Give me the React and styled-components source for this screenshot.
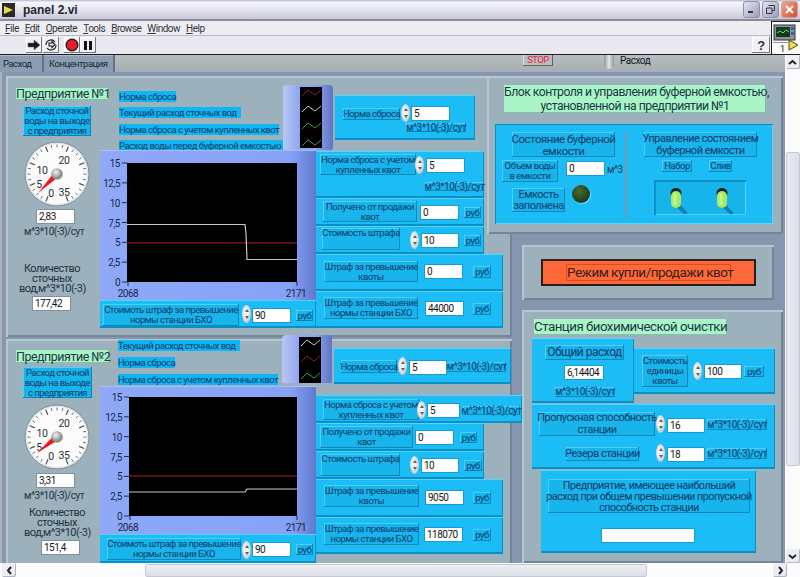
import React from "react";
import styled, { createGlobalStyle } from "styled-components";

const GlobalStyle = createGlobalStyle`
  html, body { margin: 0; padding: 0; background: #8b9bb0; }
  body { font-family: Roboto, "Liberation Sans", Arial, sans-serif; letter-spacing: -0.5px; }
  svg text { font-family: Roboto, "Liberation Sans", Arial, sans-serif; }
`;

const CYAN = "#1cbdf6";
const INK = "#103a68";

// window chrome
const Window = styled.div`
  width: 800px;
  height: 577px;
  overflow: hidden;
  display: flex;
  flex-direction: column;
  background: #ecedf2;
`;
const TitleBar = styled.div`
  height: 19px;
  flex: none;
  display: flex;
  align-items: center;
  padding: 0 2px 0 2px;
  background: linear-gradient(#b8b9d4 0, #f6f6fa 12%, #e4e4ee 50%, #c6c7dc 100%);
  border-bottom: 2px solid #8b8c96;
`;
const TitleText = styled.span`
  margin-left: 8px;
  font: bold 12px "Liberation Sans", sans-serif;
  letter-spacing: 0;
  color: #23262e;
`;
const WinButtons = styled.div`
  margin-left: auto;
  display: flex;
  gap: 2px;
`;
const WinButton = styled.div`
  width: 15px;
  height: 15px;
  border-radius: 3px;
  border: 1px solid ${(p) => (p.$close ? "#c9a49a" : "#8e90aa")};
  background: ${(p) =>
    p.$close
      ? "linear-gradient(135deg, #f0a58e, #dd4a28)"
      : "linear-gradient(135deg, #e6e7f0, #9a9cb8)"};
  display: flex;
  align-items: center;
  justify-content: center;
`;
const HeaderRow = styled.div`
  flex: none;
  height: 33px;
  display: flex;
  border-bottom: 1px solid #1d1d22;
`;
const HeaderBars = styled.div`
  flex: 1;
  display: flex;
  flex-direction: column;
`;
const MenuBar = styled.div`
  height: 14px;
  display: flex;
  align-items: center;
  gap: 6px;
  padding-left: 5px;
  background: #ececf2;
  border-bottom: 1px solid #bcbcc6;
  font-size: 10px;
  color: #33363d;
`;
const ToolBar = styled.div`
  flex: 1;
  display: flex;
  align-items: center;
  padding: 0 1px 0 26px;
  background: #e8e8ee;
`;
const ToolButton = styled.div`
  width: 16px;
  height: 16px;
  margin-left: ${(p) => p.$ml || 0}px;
  display: flex;
  align-items: center;
  justify-content: center;
  background: #f1f1f4;
  box-shadow: inset -1px -1px 0 #77777f, inset 1px 1px 0 #ffffff;
`;
const HelpButton = styled(ToolButton)`
  margin-left: auto;
  width: 18px;
  font: bold 13px "Liberation Sans", sans-serif;
  color: #33333a;
`;
const IconPane = styled.div`
  width: 28px;
  background: #fbfbfb;
  border-left: 1px solid #1d1d22;
  border-top: 1px solid #1d1d22;
`;

const MainRow = styled.div`
  flex: none;
  height: 508px;
  display: flex;
`;
const LeftPane = styled.div`
  width: 785px;
  display: flex;
  flex-direction: column;
`;
const TabStrip = styled.div`
  height: 17px;
  flex: none;
  display: flex;
  align-items: flex-start;
  background: linear-gradient(#b6bdc0, #a6aeb2);
  overflow: hidden;
`;
const Tab = styled.div`
  height: 17px;
  width: ${(p) => p.$w}px;
  box-sizing: border-box;
  margin-left: ${(p) => p.$ml || 0}px;
  padding-left: ${(p) => p.$pl || 0}px;
  font-size: 9.5px;
  line-height: 17px;
  color: #1c2733;
  background: #8b9cb3;
  box-shadow: inset -2px 0 0 #62728a, inset 0 1px 0 #adbbcd;
`;
const StopButton = styled.div`
  width: 30px;
  height: 11px;
  margin-left: 408px;
  background: #b8bcc0;
  box-shadow: inset -1px -1px 0 #5f6468, inset 1px 0 0 #dfe2e4;
  color: #e8262c;
  font-size: 9.5px;
  line-height: 10px;
  text-align: center;
`;
const EnumText = styled.div`
  margin-left: 6px;
  font-size: 10px;
  line-height: 11px;
  color: #16181c;
`;
const EnumArrow = styled.div`
  width: 10px;
  height: 14px;
  margin-left: 51px;
  background: linear-gradient(90deg, #8f9598, #e4e6e8 50%, #8f9598);
  border-radius: 0 0 6px 6px;
`;

const Workspace = styled.div`
  flex: 1;
  height: 491px;
  display: flex;
  overflow: hidden;
  padding: 4px 0 0 6px;
  box-sizing: border-box;
  background: #8596ae;
  box-shadow: inset 2px 0 0 #a8b2b8;
`;
const LeftColumn = styled.div`
  width: 506px;
  flex: none;
  display: flex;
  flex-direction: column;
  gap: 2px;
`;
const RightColumn = styled.div`
  width: 296px;
  flex: none;
  margin-left: -25px;
  z-index: 1;
  display: flex;
  flex-direction: column;
  align-items: flex-start;
`;

const Panel = styled.div`
  width: ${(p) => p.$w}px;
  height: ${(p) => p.$h}px;
  margin: ${(p) => p.$m || 0};
  flex: none;
  background: #9db1bc;
  box-shadow: inset 2px 2px 0 #b6c7cf, inset -2px -2px 0 #748598;
`;
const EnterprisePanel = styled(Panel)`
  display: flex;
  align-items: flex-start;
`;
const SideColumn = styled.div`
  width: 94px;
  flex: none;
  display: flex;
  flex-direction: column;
  align-items: flex-start;
`;
const PlantArea = styled.div`
  flex: 1;
  display: flex;
  flex-direction: column;
  position: relative;
`;
const TopRow = styled.div`
  height: ${(p) => p.$h}px;
  display: flex;
  align-items: flex-start;
`;
const BottomRow = styled.div`
  display: flex;
  align-items: flex-start;
`;
const MintTitle = styled.div`
  flex: none;
  width: ${(p) => p.$w}px;
  height: ${(p) => p.$h}px;
  margin: ${(p) => p.$m || 0};
  position: relative;
  z-index: 2;
  background: #a9f5c8;
  box-shadow: inset -1px -1px 0 #7fc3a2;
  color: #1b3a45;
  font-size: ${(p) => p.$fs || 12.2}px;
  line-height: ${(p) => p.$lh || p.$h}px;
  text-align: ${(p) => p.$align || "center"};
  white-space: nowrap;
`;
const Caption = styled.div`
  flex: none;
  box-sizing: border-box;
  width: ${(p) => p.$w}px;
  height: ${(p) => p.$h}px;
  margin: ${(p) => p.$m || 0};
  position: relative;
  z-index: 2;
  display: flex;
  align-items: ${(p) => (p.$top ? "flex-start" : "center")};
  justify-content: center;
  text-align: center;
  background: #17b5ec;
  box-shadow: inset -1px -1px 0 #0a86bb, inset 1px 1px 0 #4fd0fa;
  color: ${INK};
  font-size: ${(p) => p.$fs || 9.5}px;
  line-height: ${(p) => p.$lh || 10}px;
  white-space: pre;
`;
const LegendLabels = styled.div`
  width: 164px;
  margin: ${(p) => p.$m};
  flex: none;
  display: flex;
  flex-direction: column;
  gap: ${(p) => p.$gap}px;
`;
const LegendLabel = styled.div`
  height: 11px;
  width: ${(p) => p.$w}px;
  background: #0fb6f2;
  color: ${INK};
  font-size: 9.5px;
  line-height: 11px;
  white-space: nowrap;
`;
const Legend = styled.div`
  width: 50px;
  height: ${(p) => p.$h}px;
  margin-top: ${(p) => p.$mt}px;
  flex: none;
  position: relative;
  z-index: 2;
  padding: 2px 0 0 17px;
  box-sizing: border-box;
  border-radius: 4px 4px 2px 2px;
  background: linear-gradient(90deg, #b8c7f3, #8ea5f0 35%, #8ea5f0 65%, #6074c2);
  svg { display: block; }
`;
const CtlRow = styled.div`
  flex: none;
  box-sizing: border-box;
  width: ${(p) => p.$w}px;
  height: ${(p) => p.$h}px;
  margin: ${(p) => p.$m || 0};
  display: flex;
  flex-wrap: wrap;
  align-items: flex-start;
  align-content: flex-start;
  background: ${CYAN};
  box-shadow: inset 0 1px 0 #55d3fb, inset -1px -2px 0 #0b90c6;
  position: relative;
`;
const Stack = styled.div`
  margin-top: ${(p) => p.$mt}px;
  display: flex;
  flex-direction: column;
  align-items: flex-start;
`;
const Graph = styled.div`
  width: 216px;
  flex: none;
`;
const ChartBox = styled.div`
  height: ${(p) => p.$h}px;
  background: linear-gradient(90deg, #8fa9f8 0, #86a2f7 88%, #6179cb 100%);
  box-shadow: inset 0 1px 0 #a9bdf8;
  svg { display: block; }
`;
const Numeric = styled.div`
  flex: none;
  box-sizing: border-box;
  width: ${(p) => p.$w}px;
  height: 13px;
  margin: ${(p) => p.$m || 0};
  padding-left: 2px;
  background: #fdfdfd;
  outline: 1px solid ${(p) => (p.$grey ? "#7f919d" : "#129ed2")};
  color: #15181c;
  font-size: 10px;
  letter-spacing: -0.5px;
  line-height: 13px;
`;
const Spinner = styled.div`
  flex: none;
  width: 9px;
  height: 18px;
  margin: ${(p) => p.$m || 0};
  position: relative;
  z-index: 3;
  border-radius: 50%;
  background: radial-gradient(ellipse at 45% 45%, #f2f2f2 30%, #a3a7aa 100%);
  &::before, &::after {
    content: "";
    position: absolute;
    left: 2.5px;
    border-left: 2px solid transparent;
    border-right: 2px solid transparent;
  }
  &::before { top: 4px; border-bottom: 3px solid #5d6266; }
  &::after { bottom: 4px; border-top: 3px solid #5d6266; }
`;
const Plain = styled.div`
  flex: none;
  width: ${(p) => p.$w}px;
  margin: ${(p) => p.$m || 0};
  text-align: center;
  color: #1f3442;
  font-size: ${(p) => p.$fs || 11}px;
  line-height: 10px;
  white-space: pre;
`;
const SideLine = styled.div`
  display: flex;
  align-items: flex-start;
`;
const BlockPanel = styled(Panel)`
  padding-top: 9px;
  box-sizing: border-box;
  overflow: hidden;
`;
const BlockBody = styled.div`
  width: 278px;
  height: 100px;
  margin: 11px 0 0 8px;
  display: flex;
  align-items: flex-start;
  background: ${CYAN};
  box-shadow: inset 1px 1px 0 #0b90c6, inset -1px -1px 0 #5ed6fb;
`;
const BlockSection = styled.div`
  width: ${(p) => p.$w}px;
  flex: none;
  display: flex;
  flex-direction: column;
  align-items: flex-start;
`;
const Divider = styled.div`
  width: 2px;
  height: 85px;
  margin-top: 8px;
  background: #7d95a6;
`;
const Led = styled.div`
  width: 18px;
  height: 18px;
  margin: 3px 0 0 7px;
  border-radius: 50%;
  background: radial-gradient(circle at 40% 35%, #4c6b2e, #1e3a1a 70%);
  box-shadow: 1px 1px 1px #6fdcff;
`;
const ToggleBox = styled.div`
  width: 92px;
  height: 35px;
  margin: 8px 0 0 27px;
  display: flex;
  align-items: flex-start;
  gap: 26px;
  padding: 8px 0 0 16px;
  box-sizing: border-box;
  background: #17b4ea;
  box-shadow: inset 2px 2px 0 #0e8fc3, inset -1px -1px 0 #55d3fb;
`;
const ModePanel = styled(Panel)`
  padding: 14px 0 0 19px;
  box-sizing: border-box;
`;
const ModeButton = styled.div`
  width: 215px;
  height: 27px;
  box-sizing: border-box;
  display: flex;
  align-items: center;
  justify-content: center;
  background: #ff6838;
  border: 2px solid #2a1e1a;
  border-top-color: #33251f;
`;
const ModeLabel = styled.div`
  width: 165px;
  height: 17px;
  border: 1px solid #d94e20;
  box-sizing: border-box;
  text-align: center;
  font-size: 13.5px;
  line-height: 15px;
  color: #3a1c1a;
  white-space: nowrap;
`;
const StationPanel = styled(Panel)`
  display: flex;
  flex-direction: column;
  align-items: flex-start;
`;
const StationRow = styled.div`
  display: flex;
  align-items: flex-start;
  margin-top: 3px;
  margin-left: 10px;
`;

// scroll bars
const VScroll = styled.div`
  width: 15px;
  flex: none;
  display: flex;
  flex-direction: column;
  align-items: center;
  background: #fcfcfd;
`;
const ArrowButton = styled.div`
  width: 14px;
  height: 14px;
  flex: none;
  margin: ${(p) => p.$m || 0};
  display: flex;
  align-items: center;
  justify-content: center;
  border-radius: 2px;
  background: #eceef3;
  box-shadow: inset -1px -1px 0 #b2b5c2;
`;
const VThumb = styled.div`
  width: 14px;
  height: 314px;
  margin-top: 83px;
  box-sizing: border-box;
  background: linear-gradient(90deg, #e9ebf0, #dde0e8);
  border: 1px solid #c6c9d4;
  border-radius: 2px;
`;
const HScroll = styled.div`
  height: 14px;
  flex: none;
  display: flex;
  align-items: center;
  padding-left: 2px;
  background: #fcfcfd;
`;
const HThumb = styled.div`
  width: 502px;
  height: 13px;
  margin-left: 129px;
  box-sizing: border-box;
  background: linear-gradient(#eceef2, #dcdfe6);
  border: 1px solid #c6c9d4;
  border-radius: 2px;
`;

const chevron = (d) => (
  <svg width="9" height="7" viewBox="0 0 9 7">
    <path d={d} fill="none" stroke="#20242c" strokeWidth="2" />
  </svg>
);

const VIcon = () => (
  <svg width="27" height="31" viewBox="0 0 27 31">
    <rect x="2" y="3" width="21" height="15" fill="#8d9296" stroke="#333" />
    <rect x="4" y="5" width="14" height="10" fill="#16381f" />
    <path d="M5 11 L8 9 L11 11 L14 8 L17 10" stroke="#6ee06e" fill="none" />
    <rect x="19" y="5" width="3" height="3" fill="#3c5fb0" />
    <rect x="19" y="10" width="3" height="3" fill="#3c5fb0" />
    <path d="M17 18 L26 23 L17 28 Z" fill="#e8e04a" stroke="#4a4a1a" />
    <rect x="1" y="20" width="15" height="0.6" fill="#555" />
    <text x="8" y="30" fontSize="9" fill="#222">1</text>
  </svg>
);

const Gauge = ({ tip, m, values }) => {
  const ticks = [];
  for (let i = 0; i <= 28; i++) {
    const a = ((-158 + (316 * i) / 28) * Math.PI) / 180;
    const big = i % 4 === 0;
    const r1 = big ? 24 : 26.5;
    ticks.push(
      <line
        key={i}
        x1={33 + Math.sin(a) * r1}
        y1={33 - Math.cos(a) * r1}
        x2={33 + Math.sin(a) * 29.5}
        y2={33 - Math.cos(a) * 29.5}
        stroke="#4b4f52"
        strokeWidth={big ? 1.2 : 0.8}
      />
    );
  }
  const [tx, ty] = tip;
  const len = Math.hypot(tx - 33, ty - 33);
  const nx = (-(ty - 33) / len) * 3.2;
  const ny = ((tx - 33) / len) * 3.2;
  return (
    <svg width="66" height="66" viewBox="0 0 66 66" style={{ margin: m, flex: "none", display: "block" }}>
      <defs>
        <radialGradient id="hub" cx="40%" cy="35%">
          <stop offset="0" stopColor="#f4f4f4" />
          <stop offset="1" stopColor="#8a8d8f" />
        </radialGradient>
      </defs>
      <circle cx="33" cy="33" r="32" fill="#dfe6ea" stroke="#7d8f9b" strokeWidth="1" />
      <circle cx="33" cy="33" r="30" fill="#fbfbfb" />
      {ticks}
      {values.map(([t, x, y]) => (
        <text key={t} x={x} y={y} fontSize="10.5" textAnchor="middle" fill="#28323a">
          {t}
        </text>
      ))}
      <polygon points={`${tx},${ty} ${33 + nx},${33 + ny} ${33 - nx},${33 - ny}`} fill="#f4161c" />
      <circle cx="33" cy="33" r="5.8" fill="url(#hub)" />
    </svg>
  );
};
const dial = [
  ["20", 40, 23],
  ["10", 18, 33],
  ["5", 15, 47],
  ["0", 27, 56],
  ["35", 40, 55],
];

const Chart = ({ h, left, top, bottom, lines }) => {
  const right = 197;
  const labels = ["0", "2,5", "5", "7,5", "10", "12,5", "15"];
  const step = (bottom - top) / 6;
  return (
    <svg width="216" height={h} viewBox={`0 0 216 ${h}`}>
      <rect x={left} y={top} width={right - left} height={bottom - top} fill="#000" />
      {labels.map((t, i) => {
        const y = bottom - i * step;
        return (
          <g key={t}>
            <line x1={left - 5} x2={left} y1={y} y2={y} stroke="#1b2a55" />
            <text x={left - 7} y={y + 4} fontSize="10" textAnchor="end" fill="#18264a">
              {t}
            </text>
          </g>
        );
      })}
      <line x1={left + 1} x2={left + 1} y1={bottom} y2={bottom + 4} stroke="#1b2a55" />
      <line x1={right} x2={right} y1={bottom} y2={bottom + 4} stroke="#1b2a55" />
      <text x={28} y={bottom + 15} fontSize="10" textAnchor="middle" fill="#18264a">2068</text>
      <text x={196} y={bottom + 15} fontSize="10" textAnchor="middle" fill="#18264a">2171</text>
      {lines.map(([color, pts]) => (
        <polyline key={color} points={pts} fill="none" stroke={color} strokeWidth="1.2" />
      ))}
    </svg>
  );
};

const LegendWaves = ({ rows, h }) => (
  <svg width="22" height={h} viewBox={`0 0 22 ${h}`}>
    <rect width="22" height={h} fill="#000" />
    {rows.map(([color, y]) => (
      <path
        key={y}
        d={`M2 ${y + 4} L8 ${y - 2} L15 ${y + 3} L21 ${y - 2}`}
        stroke={color}
        strokeWidth="1"
        fill="none"
      />
    ))}
  </svg>
);

const Toggle = () => (
  <svg width="20" height="27" viewBox="0 0 20 27" style={{ flex: "none" }}>
    <path d="M7 14 L17 24 Q18 27 14 26 L4 17 Z" fill="#0d6f9c" opacity="0.75" />
    <ellipse cx="6" cy="5" rx="5.5" ry="5" fill="#10222c" />
    <rect x="1" y="3" width="10" height="17" rx="5" fill="#a6ec62" />
    <rect x="3.5" y="5" width="3" height="12" rx="1.5" fill="#c6f494" />
  </svg>
);

export default function App() {
  return (
    <Window>
      <GlobalStyle />
      <TitleBar>
        <svg width="13" height="14" viewBox="0 0 13 14">
          <rect width="13" height="14" fill="#2a2a22" />
          <path d="M2 3 L11 7 L2 11 Z" fill="#e9dc4a" />
        </svg>
        <TitleText>panel 2.vi</TitleText>
        <WinButtons>
          <WinButton>
            <svg width="9" height="9" viewBox="0 0 9 9">
              <rect x="1" y="6" width="5" height="2" fill="#33354c" />
            </svg>
          </WinButton>
          <WinButton>
            <svg width="11" height="11" viewBox="0 0 11 11">
              <path d="M3.5 1.5 H9.5 V6.5 H7 M1.5 4 H7 V9.5 H1.5 Z" fill="none" stroke="#33354c" />
            </svg>
          </WinButton>
          <WinButton $close>
            <svg width="11" height="11" viewBox="0 0 11 11">
              <path d="M2 2 L9 9 M9 2 L2 9" stroke="#fff" strokeWidth="2" />
            </svg>
          </WinButton>
        </WinButtons>
      </TitleBar>
      <HeaderRow>
        <HeaderBars>
          <MenuBar>
            <span><u>F</u>ile</span>
            <span><u>E</u>dit</span>
            <span><u>O</u>perate</span>
            <span><u>T</u>ools</span>
            <span><u>B</u>rowse</span>
            <span><u>W</u>indow</span>
            <span><u>H</u>elp</span>
          </MenuBar>
          <ToolBar>
            <ToolButton>
              <svg width="14" height="12" viewBox="0 0 14 12">
                <path d="M1 4 H7 V1 L13 6 L7 11 V8 H1 Z" fill="#1a1a1a" stroke="#666" strokeWidth="0.5" />
              </svg>
            </ToolButton>
            <ToolButton $ml={1}>
              <svg width="14" height="14" viewBox="0 0 14 14" fill="none" stroke="#222" strokeWidth="1.2">
                <path d="M2 7 A5 5 0 0 1 11 4 M12 7 A5 5 0 0 1 3 10" />
                <path d="M5 5 H8 V3.5 L11 6.5 L8 9.5 V8 H5 Z" fill="#eee" />
              </svg>
            </ToolButton>
            <ToolButton $ml={5}>
              <svg width="14" height="14" viewBox="0 0 14 14">
                <circle cx="7" cy="7" r="6.5" fill="#222" />
                <circle cx="7" cy="7" r="5" fill="#ee1c25" />
              </svg>
            </ToolButton>
            <ToolButton>
              <svg width="12" height="12" viewBox="0 0 12 12">
                <rect x="2" y="2" width="3" height="9" fill="#111" />
                <rect x="7" y="2" width="3" height="9" fill="#111" />
              </svg>
            </ToolButton>
            <HelpButton>?</HelpButton>
          </ToolBar>
        </HeaderBars>
        <IconPane>
          <VIcon />
        </IconPane>
      </HeaderRow>
      <MainRow>
        <LeftPane>
          <TabStrip>
            <Tab $w={44} $pl={3}>Расход</Tab>
            <Tab $w={71} $ml={0} $pl={5}>Концентрация</Tab>
            <StopButton>STOP</StopButton>
            <EnumArrow />
            <EnumText>Расход</EnumText>
          </TabStrip>
          <Workspace>
            <LeftColumn>
              <EnterprisePanel $w={506} $h={261}>
                <SideColumn>
                  <MintTitle $w={93} $h={12} $m="12px 0 0 10px" $fs={12.5}>Предприятие №1</MintTitle>
                  <Caption $w={68} $h={30} $m="6px 0 0 17px">{"Расход сточной\nводы на выходе\nс предприятия"}</Caption>
                  <Gauge m="5px 0 0 18px" tip={[14, 52]} values={dial} />
                  <Numeric $grey $w={37} $m="3px 0 0 31px">2,83</Numeric>
                  <Plain $w={62} $m="4px 0 0 17px" $fs={10}>м^3*10(-3)/сут</Plain>
                  <Plain $w={66} $m="27px 0 0 13px">{"Количество\nсточных\nвод,м^3*10(-3)"}</Plain>
                  <Numeric $grey $w={37} $m="3px 0 0 27px">177,42</Numeric>
                </SideColumn>
                <PlantArea>
                  <TopRow $h={74}>
                    <LegendLabels $m="15px 0 0 19px" $gap={5.4}>
                      <LegendLabel $w={57}>Норма сброса</LegendLabel>
                      <LegendLabel $w={122}>Текущий расход сточных вод</LegendLabel>
                      <LegendLabel $w={160}>Норма сброса с учетом купленных квот</LegendLabel>
                      <LegendLabel $w={164}>Расход воды перед буферной емкостью</LegendLabel>
                    </LegendLabels>
                    <Legend $h={65} $mt={9}>
                      <LegendWaves h={61} rows={[["#8c1c28", 5], ["#c8c8c8", 21], ["#3d9c32", 38], ["#5d7f8c", 55]]} />
                    </Legend>
                    <CtlRow $w={140} $h={45} $m="19px 0 0 2px">
                      <Caption $w={57} $h={12} $m="13px 0 0 8px">Норма сброса</Caption>
                      <Spinner $m="9px 0 0 1px" />
                      <Numeric $w={37} $m="12px 0 0 2px">5</Numeric>
                      <Caption $w={60} $h={9} $m="1px 0 0 71px" $fs={10}>м^3*10(-3)/сут</Caption>
                    </CtlRow>
                  </TopRow>
                  <BottomRow>
                    <Graph>
                      <ChartBox $h={150}>
                        <Chart
                          h={150}
                          left={27}
                          top={13}
                          bottom={132}
                          lines={[
                            ["#b01c28", "27,93 197,93"],
                            ["#c9c9c9", "27,74.5 145,74.5 146,84 147,109.5 197,109.5"],
                          ]}
                        />
                      </ChartBox>
                      <CtlRow $w={216} $h={28}>
                        <Caption $w={136} $h={22} $m="4px 0 0 3px">{"Стоимоть штраф за превышение\nнормы станции БХО"}</Caption>
                        <Spinner $m="5px 0 0 3px" />
                        <Numeric $w={37} $m="9px 0 0 2px">90</Numeric>
                        <Caption $w={17} $h={11} $m="10px 0 0 6px">руб</Caption>
                      </CtlRow>
                    </Graph>
                    <Stack $mt={1}>
                      <CtlRow $w={168} $h={47}>
                        <Caption $w={96} $h={21} $m="3px 0 0 4px">{"Норма сброса с учетом\nкупленных квот"}</Caption>
                        <Spinner $m="5px 0 0 -1px" />
                        <Numeric $w={37} $m="8px 0 0 3px">5</Numeric>
                        <Caption $w={59} $h={9} $m="7px 0 0 109px" $fs={10}>м^3*10(-3)/сут</Caption>
                      </CtlRow>
                      <CtlRow $w={168} $h={28}>
                        <Caption $w={94} $h={21} $m="3px 0 0 7px">{"Получено от продажи\nквот"}</Caption>
                        <Numeric $w={37} $m="8px 0 0 4px">0</Numeric>
                        <Caption $w={17} $h={11} $m="9px 0 0 6px">руб</Caption>
                      </CtlRow>
                      <CtlRow $w={168} $h={28}>
                        <Caption $w={78} $h={22} $m="2px 0 0 6px" $top>Стоимость штрафа</Caption>
                        <Spinner $m="5px 0 0 10px" />
                        <Numeric $w={36} $m="8px 0 0 3px">10</Numeric>
                        <Caption $w={17} $h={11} $m="9px 0 0 6px">руб</Caption>
                      </CtlRow>
                      <CtlRow $w={187} $h={37}>
                        <Caption $w={94} $h={21} $m="7px 0 0 8px">{"Штраф за превышение\nквоты"}</Caption>
                        <Numeric $w={37} $m="11px 0 0 7px">0</Numeric>
                        <Caption $w={18} $h={12} $m="12px 0 0 11px">руб</Caption>
                      </CtlRow>
                      <CtlRow $w={187} $h={37}>
                        <Caption $w={94} $h={22} $m="6px 0 0 8px">{"Штраф за превышение\nнормы станции БХО"}</Caption>
                        <Numeric $w={37} $m="11px 0 0 8px">44000</Numeric>
                        <Caption $w={18} $h={12} $m="12px 0 0 10px">руб</Caption>
                      </CtlRow>
                    </Stack>
                  </BottomRow>
                </PlantArea>
              </EnterprisePanel>
              <EnterprisePanel $w={506} $h={240}>
                <SideColumn>
                  <MintTitle $w={93} $h={13} $m="11px 0 0 10px" $fs={12.5}>Предприятие №2</MintTitle>
                  <Caption $w={69} $h={31} $m="4px 0 0 17px">{"Расход сточной\nводы на выходе\nс предприятия"}</Caption>
                  <Gauge m="6px 0 0 18px" tip={[13, 49]} values={dial} />
                  <Numeric $grey $w={37} $m="4px 0 0 31px">3,31</Numeric>
                  <Plain $w={62} $m="4px 0 0 17px" $fs={10}>м^3*10(-3)/сут</Plain>
                  <Plain $w={66} $m="7px 0 0 18px">{"Количество\nсточных\nвод,м^3*10(-3)"}</Plain>
                  <Numeric $grey $w={37} $m="3px 0 0 36px">151,4</Numeric>
                </SideColumn>
                <PlantArea>
                  <TopRow $h={47}>
                    <LegendLabels $m="1px 0 0 18px" $gap={6}>
                      <LegendLabel $w={122}>Текущий расход сточных вод</LegendLabel>
                      <LegendLabel $w={57}>Норма сброса</LegendLabel>
                      <LegendLabel $w={160}>Норма сброса с учетом купленных квот</LegendLabel>
                    </LegendLabels>
                    <Legend $h={48} $mt={-4}>
                      <LegendWaves h={46} rows={[["#c8c8c8", 5], ["#8c1c28", 21], ["#3d9c32", 38]]} />
                    </Legend>
                    <CtlRow $w={177} $h={36} $m="9px 0 0 2px">
                      <Caption $w={56} $h={13} $m="12px 0 0 7px">Норма сброса</Caption>
                      <Spinner $m="9px 0 0 1px" />
                      <Numeric $w={36} $m="13px 0 0 3px">5</Numeric>
                      <Caption $w={59} $h={10} $m="14px 0 0 1px" $fs={10}>м^3*10(-3)/сут</Caption>
                    </CtlRow>
                  </TopRow>
                  <BottomRow>
                    <Graph>
                      <ChartBox $h={148}>
                        <Chart
                          h={148}
                          left={29}
                          top={11}
                          bottom={130}
                          lines={[
                            ["#b01c28", "29,90 197,90"],
                            ["#c9c9c9", "29,106 145,106 147,103 197,103"],
                          ]}
                        />
                      </ChartBox>
                      <CtlRow $w={216} $h={29} $m="0">
                        <Caption $w={134} $h={22} $m="4px 0 0 7px">{"Стоимоть штраф за превышение\nнормы станции БХО"}</Caption>
                        <Spinner $m="7px 0 0 1px" />
                        <Numeric $w={37} $m="9px 0 0 2px">90</Numeric>
                        <Caption $w={17} $h={11} $m="10px 0 0 6px">руб</Caption>
                      </CtlRow>
                    </Graph>
                    <Stack $mt={9}>
                      <CtlRow $w={206} $h={28}>
                        <Caption $w={96} $h={21} $m="4px 0 0 7px">{"Норма сброса с учетом\nкупленных квот"}</Caption>
                        <Spinner $m="6px 0 0 -2px" />
                        <Numeric $w={31} $m="9px 0 0 2px">5</Numeric>
                        <Caption $w={57} $h={9} $m="11px 0 0 4px" $fs={10}>м^3*10(-3)/сут</Caption>
                      </CtlRow>
                      <CtlRow $w={168} $h={28}>
                        <Caption $w={93} $h={22} $m="3px 0 0 4px">{"Получено от продажи\nквот"}</Caption>
                        <Numeric $w={37} $m="8px 0 0 3px">0</Numeric>
                        <Caption $w={17} $h={11} $m="9px 0 0 7px">руб</Caption>
                      </CtlRow>
                      <CtlRow $w={168} $h={28}>
                        <Caption $w={79} $h={22} $m="3px 0 0 5px" $top>Стоимость штрафа</Caption>
                        <Spinner $m="5px 0 0 10px" />
                        <Numeric $w={36} $m="8px 0 0 3px">10</Numeric>
                        <Caption $w={18} $h={11} $m="9px 0 0 6px">руб</Caption>
                      </CtlRow>
                      <CtlRow $w={187} $h={38}>
                        <Caption $w={95} $h={22} $m="6px 0 0 8px">{"Штраф за превышение\nквоты"}</Caption>
                        <Numeric $w={37} $m="12px 0 0 7px">9050</Numeric>
                        <Caption $w={18} $h={12} $m="13px 0 0 10px">руб</Caption>
                      </CtlRow>
                      <CtlRow $w={187} $h={37}>
                        <Caption $w={95} $h={22} $m="6px 0 0 8px">{"Штраф за превышение\nнормы станции БХО"}</Caption>
                        <Numeric $w={37} $m="11px 0 0 6px">118070</Numeric>
                        <Caption $w={18} $h={12} $m="12px 0 0 11px">руб</Caption>
                      </CtlRow>
                    </Stack>
                  </BottomRow>
                </PlantArea>
              </EnterprisePanel>
            </LeftColumn>
            <RightColumn>
              <BlockPanel $w={296} $h={158}>
                <MintTitle $w={262} $h={28} $m="0 0 0 17px" $lh={14}>
                  Блок контроля и управления буферной емкостью,
                  <br />
                  установленной на предприятии №1
                </MintTitle>
                <BlockBody>
                  <BlockSection $w={130}>
                    <Caption $w={103} $h={25} $m="8px 0 0 17px" $fs={11.5} $lh={12}>{"Состояние буферной\nемкости"}</Caption>
                    <SideLine>
                      <Caption $w={56} $h={22} $m="3px 0 0 7px">{"Объем воды\nв емкости"}</Caption>
                      <Numeric $w={37} $m="5px 0 0 9px">0</Numeric>
                      <Plain $w={15} $m="8px 0 0 3px" $fs={10}>м^3</Plain>
                    </SideLine>
                    <SideLine>
                      <Caption $w={53} $h={24} $m="6px 0 0 17px" $fs={11} $lh={11}>{"Емкость\nзаполнена"}</Caption>
                      <Led />
                    </SideLine>
                  </BlockSection>
                  <Divider />
                  <BlockSection $w={146}>
                    <Caption $w={113} $h={25} $m="8px 0 0 17px" $fs={11} $lh={12}>{"Управление состоянием\nбуферной емкости"}</Caption>
                    <SideLine>
                      <Caption $w={30} $h={12} $m="3px 0 0 35px">Набор</Caption>
                      <Caption $w={23} $h={12} $m="3px 0 0 17px">Слив</Caption>
                    </SideLine>
                    <ToggleBox>
                      <Toggle />
                      <Toggle />
                    </ToggleBox>
                  </BlockSection>
                </BlockBody>
              </BlockPanel>
              <ModePanel $w={252} $h={55} $m="11px 0 0 35px">
                <ModeButton>
                  <ModeLabel>Режим купли/продажи квот</ModeLabel>
                </ModeButton>
              </ModePanel>
              <StationPanel $w={261} $h={253} $m="10px 0 0 35px">
                <MintTitle $w={193} $h={16} $m="9px 0 0 12px" $fs={13.3}>Станция биохимической очистки</MintTitle>
                <StationRow>
                  <CtlRow $w={102} $h={65}>
                    <Caption $w={79} $h={15} $m="7px 0 0 13px" $fs={12} $lh={13}>Общий расход</Caption>
                    <Numeric $w={38} $m="6px 0 0 33px">6,14404</Numeric>
                    <Caption $w={60} $h={10} $m="8px 0 0 23px" $fs={10}>м^3*10(-3)/сут</Caption>
                  </CtlRow>
                  <CtlRow $w={141} $h={46} $m="10px 0 0 0">
                    <Caption $w={46} $h={32} $m="7px 0 0 8px">{"Стоимость\nединицы\nквоты"}</Caption>
                    <Spinner $m="14px 0 0 5px" />
                    <Numeric $w={36} $m="17px 0 0 3px">100</Numeric>
                    <Caption $w={20} $h={11} $m="18px 0 0 3px">руб</Caption>
                  </CtlRow>
                </StationRow>
                <CtlRow $w={243} $h={65} $m="1px 0 0 10px">
                  <Caption $w={116} $h={24} $m="8px 0 0 7px" $fs={11} $lh={12}>{"Пропускная способность\nстанции"}</Caption>
                  <Spinner $m="11px 0 0 1px" />
                  <Numeric $w={36} $m="15px 0 0 3px">16</Numeric>
                  <Caption $w={60} $h={11} $m="15px 0 0 3px" $fs={10}>м^3*10(-3)/сут</Caption>
                  <Caption $w={73} $h={14} $m="11px 0 0 34px" $fs={11}>Резерв станции</Caption>
                  <Spinner $m="8px 0 0 17px" />
                  <Numeric $w={36} $m="12px 0 0 3px">18</Numeric>
                  <Caption $w={60} $h={11} $m="12px 0 0 3px" $fs={10}>м^3*10(-3)/сут</Caption>
                </CtlRow>
                <CtlRow $w={215} $h={83} $m="1px 0 0 19px">
                  <Caption $w={202} $h={34} $m="9px 0 0 7px" $fs={10.8} $lh={11}>{"Предприятие, имеющее наибольший\nрасход при общем превышении пропускной\nспособность станции"}</Caption>
                  <Numeric $w={92} $m="16px 0 0 61px" />
                </CtlRow>
              </StationPanel>
            </RightColumn>
          </Workspace>
        </LeftPane>
        <VScroll>
          <ArrowButton>{chevron("M1 5 L4.5 2 L8 5")}</ArrowButton>
          <VThumb />
          <ArrowButton $m="auto 0 0 0">{chevron("M1 2 L4.5 5 L8 2")}</ArrowButton>
        </VScroll>
      </MainRow>
      <HScroll>
        <ArrowButton>
          <svg width="7" height="9" viewBox="0 0 7 9">
            <path d="M5 1 L2 4.5 L5 8" fill="none" stroke="#20242c" strokeWidth="2" />
          </svg>
        </ArrowButton>
        <HThumb />
        <ArrowButton $m="0 0 0 126px">
          <svg width="7" height="9" viewBox="0 0 7 9">
            <path d="M2 1 L5 4.5 L2 8" fill="none" stroke="#20242c" strokeWidth="2" />
          </svg>
        </ArrowButton>
      </HScroll>
    </Window>
  );
}
